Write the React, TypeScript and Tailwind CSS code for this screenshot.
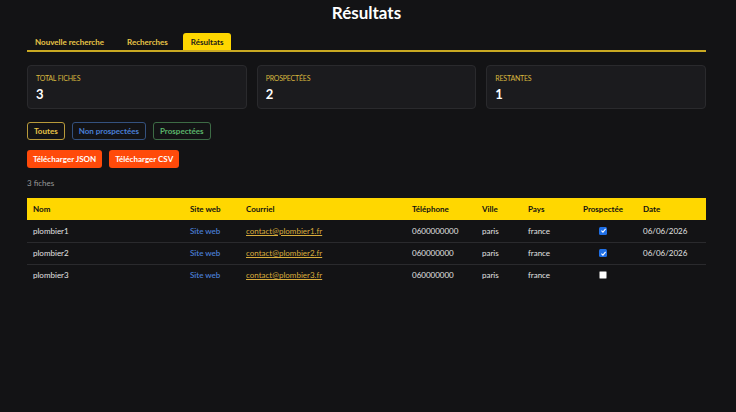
import React from 'react';

const FONT = "font-['Lato','Liberation_Sans',sans-serif]";

type Fiche = {
  nom: string;
  email: string;
  tel: string;
  ville: string;
  pays: string;
  prospectee: boolean;
  date: string;
};

const fiches: Fiche[] = [
  { nom: 'plombier1', email: 'contact@plombier1.fr', tel: '0600000000', ville: 'paris', pays: 'france', prospectee: true, date: '06/06/2026' },
  { nom: 'plombier2', email: 'contact@plombier2.fr', tel: '060000000', ville: 'paris', pays: 'france', prospectee: true, date: '06/06/2026' },
  { nom: 'plombier3', email: 'contact@plombier3.fr', tel: '060000000', ville: 'paris', pays: 'france', prospectee: false, date: '' },
];

const StatCard = ({ label, value }: { label: string; value: string }) => (
  <div className="h-[44px] rounded-[4px] border border-[#2a2a2d] bg-[#1b1b1e] px-[8px] pt-[9px]">
    <div className="text-[7px] uppercase leading-none tracking-[-0.2px] text-[#d8b73e]">{label}</div>
    <div className="mt-[6px] text-[13px] font-bold leading-none text-white">{value}</div>
  </div>
);

const Check = ({ checked }: { checked: boolean }) =>
  checked ? (
    <span className="inline-flex h-[8px] w-[8px] items-center justify-center rounded-[1.5px] bg-[#1f6fe5]">
      <svg viewBox="0 0 10 10" className="h-[7px] w-[7px]">
        <path d="M2 5.2 L4.2 7.3 L8 2.8" fill="none" stroke="white" strokeWidth="1.6" />
      </svg>
    </span>
  ) : (
    <span className="inline-block h-[8px] w-[8px] rounded-[1.5px] border border-[#8a8a8a] bg-white" />
  );

export default function App() {
  return (
    <div className={`min-h-[412px] w-full bg-[#131315] ${FONT}`}>
      <div className="ml-[27px] w-[679px] pt-[3px]">
        <h1 className="text-center text-[17px] font-bold leading-[20px] text-white">Résultats</h1>

        {/* Tabs */}
        <div className="mt-[10px] flex gap-[7px] border-b-2 border-solid border-[#c9a922]">
          <button className="h-[17px] px-[8px] text-[8px] font-bold text-[#e8c547]">Nouvelle recherche</button>
          <button className="h-[17px] px-[8px] text-[8px] font-bold text-[#e8c547]">Recherches</button>
          <button className="h-[17px] rounded-t-[3px] bg-[#ffd700] px-[8px] text-[8px] font-bold text-[#1a1a1a]">Résultats</button>
        </div>

        {/* Stats */}
        <div className="mt-[13px] grid grid-cols-3 gap-[10px]">
          <StatCard label="Total fiches" value="3" />
          <StatCard label="Prospectées" value="2" />
          <StatCard label="Restantes" value="1" />
        </div>

        {/* Filters */}
        <div className="mt-[13px] flex gap-[7px]">
          <button className="h-[18px] rounded-[3px] border border-[#b89a3a] px-[6px] text-[8px] font-bold text-[#e8c547]">Toutes</button>
          <button className="h-[18px] rounded-[3px] border border-[#34517e] px-[6px] text-[8px] font-bold text-[#4a7fd6]">Non prospectées</button>
          <button className="h-[18px] rounded-[3px] border border-[#3d6b45] px-[6px] text-[8px] font-bold text-[#5cb56a]">Prospectées</button>
        </div>

        <div className="mt-[10px] flex gap-[7px]">
          <button className="h-[18px] rounded-[3px] bg-[#ff4a0a] px-[6px] text-[8px] font-bold text-white">Télécharger JSON</button>
          <button className="h-[18px] rounded-[3px] bg-[#ff4a0a] px-[6px] text-[8px] font-bold text-white">Télécharger CSV</button>
        </div>

        <div className="mt-[10px] text-[8px] leading-[10px] text-[#9a9a9a]">3 fiches</div>

        {/* Table */}
        <table className="mt-[10px] w-full table-fixed border-collapse text-left text-[8px]">
          <colgroup>
            <col className="w-[157px]" />
            <col className="w-[56px]" />
            <col className="w-[166px]" />
            <col className="w-[70px]" />
            <col className="w-[46px]" />
            <col className="w-[55px]" />
            <col className="w-[60px]" />
            <col className="w-[69px]" />
          </colgroup>
          <thead>
            <tr className="h-[22px] bg-[#ffd700] font-bold text-[#111]">
              <th className="pl-[6px]">Nom</th>
              <th className="pl-[6px]">Site web</th>
              <th className="pl-[6px]">Courriel</th>
              <th className="pl-[6px]">Téléphone</th>
              <th className="pl-[6px]">Ville</th>
              <th className="pl-[6px]">Pays</th>
              <th className="pl-[6px]">Prospectée</th>
              <th className="pl-[6px]">Date</th>
            </tr>
          </thead>
          <tbody className="text-[#e2e2e2]">
            {fiches.map((f, i) => (
              <tr key={f.nom} className={`h-[22px] ${i < fiches.length - 1 ? 'border-b border-[#2a2a2d]' : ''}`}>
                <td className="pl-[6px]">{f.nom}</td>
                <td className="pl-[6px] font-semibold text-[#4a7fd6]">Site web</td>
                <td className="pl-[6px]">
                  <span className="text-[#d9ad3c] underline">{f.email}</span>
                </td>
                <td className="pl-[6px]">{f.tel}</td>
                <td className="pl-[6px]">{f.ville}</td>
                <td className="pl-[6px]">{f.pays}</td>
                <td className="pl-[22px]">
                  <div className="flex h-full items-center"><Check checked={f.prospectee} /></div>
                </td>
                <td className="pl-[6px]">{f.date}</td>
              </tr>
            ))}
          </tbody>
        </table>
      </div>
    </div>
  );
}
